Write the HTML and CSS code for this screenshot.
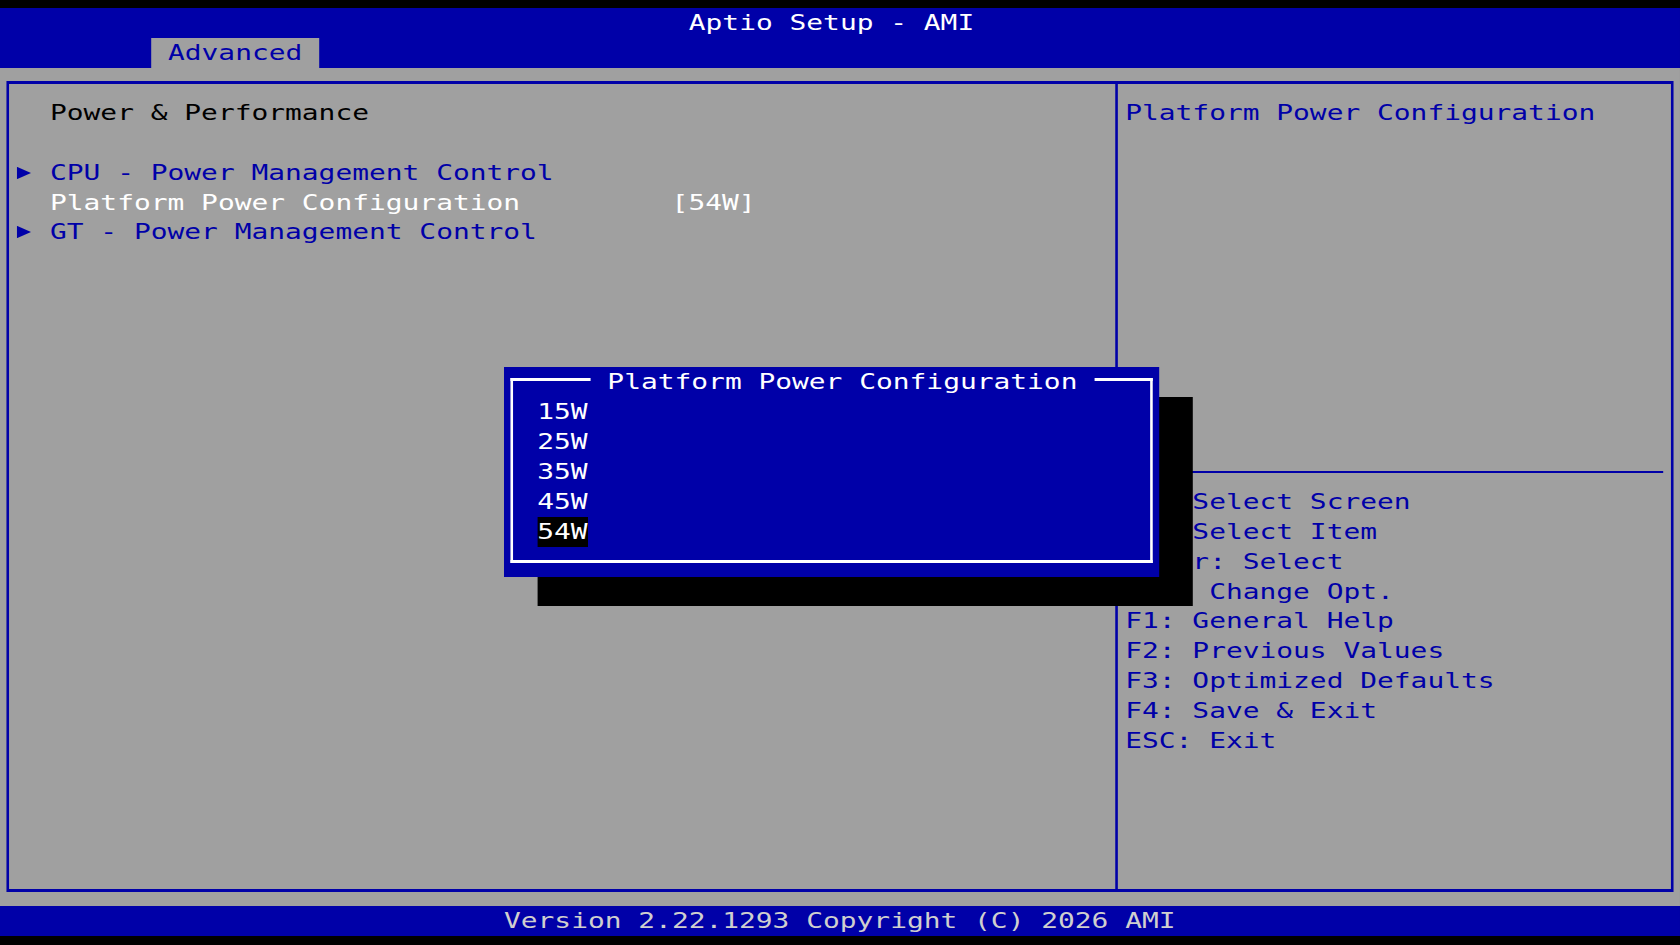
FILE: index.html
```html
<!DOCTYPE html>
<html lang="en">
<head>
    <meta charset="UTF-8">
    <meta name="viewport" content="width=device-width, initial-scale=1.0">
    <title>Aptio Setup - AMI</title>
    <link rel="stylesheet" href="styles.css">
</head>
<body>
    <div class="screen">
        <header class="topbar">
            <div class="title">Aptio Setup - AMI</div>
            <nav class="tabs">
                <span class="tab">Advanced</span>
            </nav>
        </header>

        <main class="workspace">
            <div class="frame">
                <section class="menu">
                    <div class="menu-title">Power &amp; Performance</div>
                    <div class="menu-gap"></div>
                    <div class="item submenu">
                        <span class="arrow"><svg viewBox="0 0 13 29.925"><polygon points="0,8.7 11,15 0,21.3"/></svg></span>
                        <span class="label">CPU - Power Management Control</span>
                    </div>
                    <div class="item selected">
                        <span class="arrow"></span>
                        <span class="label">Platform Power Configuration</span>
                        <span class="value">[54W]</span>
                    </div>
                    <div class="item submenu">
                        <span class="arrow"><svg viewBox="0 0 13 29.925"><polygon points="0,8.7 11,15 0,21.3"/></svg></span>
                        <span class="label">GT - Power Management Control</span>
                    </div>
                </section>

                <aside class="help">
                    <div class="help-text">Platform Power Configuration</div>
                    <div class="help-sep"></div>
                    <ul class="keys">
                        <li>&rarr;&larr;: Select Screen</li>
                        <li>&uarr;&darr;: Select Item</li>
                        <li>Enter: Select</li>
                        <li>+/-: Change Opt.</li>
                        <li>F1: General Help</li>
                        <li>F2: Previous Values</li>
                        <li>F3: Optimized Defaults</li>
                        <li>F4: Save &amp; Exit</li>
                        <li>ESC: Exit</li>
                    </ul>
                </aside>
            </div>
        </main>

        <footer class="version">Version 2.22.1293 Copyright (C) 2026 AMI</footer>

        <!-- popup list for the selected option -->
        <div class="popup-shadow"></div>
        <div class="popup">
            <div class="popup-head"><span class="popup-title">Platform Power Configuration</span></div>
            <ul class="options">
                <li>15W</li>
                <li>25W</li>
                <li>35W</li>
                <li>45W</li>
                <li><span class="current">54W</span></li>
            </ul>
        </div>
    </div>
</body>
</html>
```

FILE: styles.css
```css
:root {
    --cw: 13px;
    --rh: 29.925px;
    --bv: 2.3px;
    --bh: 3px;
    --blue: #0000a8;
    --gray: #a0a0a0;
}

* {
    box-sizing: border-box;
}

html,
body {
    margin: 0;
    padding: 0;
    height: 100%;
    overflow: hidden;
    background-color: #000;
}

body {
    font-family: "DejaVu Sans Mono", monospace;
    font-size: 21.59px;
    line-height: var(--rh);
}

/* text grid is 100 x 31 cells, stretched wide like the firmware font */
.screen {
    position: relative;
    width: calc(100 * var(--cw));
    margin-top: 8px;
    transform: scaleX(1.2923);
    transform-origin: 0 0;
}

.topbar {
    background-color: var(--blue);
    color: #fff;
}

.title {
    height: var(--rh);
    padding-left: calc(41 * var(--cw));
}

.tabs {
    display: flex;
    height: var(--rh);
    padding-left: calc(9 * var(--cw));
}

.tab {
    padding: 0 var(--cw);
    background-color: var(--gray);
    color: var(--blue);
}

.workspace {
    display: flex;
    height: calc(28 * var(--rh));
    padding: calc(var(--rh) / 2 - var(--bh) / 2) calc(var(--cw) / 2 - var(--bv) / 2);
    background-color: var(--gray);
}

.frame {
    flex: 1;
    display: flex;
    border: solid var(--blue);
    border-width: var(--bh) var(--bv);
}

.menu {
    width: calc(66 * var(--cw));
    padding: calc(var(--rh) / 2 - var(--bh) / 2) 0 0 calc(var(--cw) / 2 - var(--bv) / 2);
    border-right: var(--bv) solid var(--blue);
}

.menu-title {
    padding-left: calc(2 * var(--cw));
    color: #000;
}

.menu-gap {
    height: var(--rh);
}

.item {
    display: grid;
    grid-template-columns: calc(2 * var(--cw)) calc(37 * var(--cw)) auto;
    height: var(--rh);
}

.arrow svg {
    display: block;
    width: var(--cw);
    height: var(--rh);
    fill: var(--blue);
}

.submenu {
    color: var(--blue);
}

.selected {
    color: #fff;
}

.help {
    flex: 1;
    display: flex;
    flex-direction: column;
    padding: calc(var(--rh) / 2 - var(--bh) / 2) 0 0 calc(var(--cw) / 2 - var(--bv) / 2);
    color: var(--blue);
}

.help-text {
    height: calc(12 * var(--rh));
}

.help-sep {
    height: var(--rh);
    margin-right: calc(var(--cw) / 2 - var(--bv) / 2);
    background: linear-gradient(var(--blue), var(--blue)) center / 100% 2px no-repeat;
}

.keys {
    list-style: none;
    margin: 0;
    padding: 0;
}

.version {
    height: var(--rh);
    padding-left: calc(30 * var(--cw));
    background-color: var(--blue);
    color: #cfcfcf;
}

.popup-shadow {
    position: absolute;
    left: calc(32 * var(--cw));
    top: calc(13 * var(--rh));
    width: calc(39 * var(--cw));
    height: calc(7 * var(--rh));
    background-color: #000;
}

.popup {
    position: absolute;
    left: calc(30 * var(--cw));
    top: calc(12 * var(--rh));
    width: calc(39 * var(--cw));
    height: calc(7 * var(--rh));
    display: flex;
    flex-direction: column;
    padding: 0 calc(var(--cw) / 2 - var(--bv) / 2) calc(var(--rh) / 2 - var(--bh) / 2);
    background-color: var(--blue);
    color: #fff;
}

.popup-head {
    display: flex;
    flex: none;
    height: var(--rh);
}

.popup-head::before,
.popup-head::after {
    content: "";
    align-self: flex-end;
    height: calc(var(--rh) / 2 + var(--bh) / 2);
    border-top: var(--bh) solid #fff;
}

.popup-head::before {
    width: calc(4.5 * var(--cw) + var(--bv) / 2);
    border-left: var(--bv) solid #fff;
}

.popup-head::after {
    flex: 1;
    border-right: var(--bv) solid #fff;
}

.popup-title {
    padding: 0 var(--cw);
}

.options {
    flex: 1;
    list-style: none;
    margin: 0;
    padding: 0 0 0 calc(1.5 * var(--cw) - var(--bv) / 2);
    border: solid #fff;
    border-width: 0 var(--bv) var(--bh);
}

.current {
    display: inline-block;
    background-color: #000;
}
```
